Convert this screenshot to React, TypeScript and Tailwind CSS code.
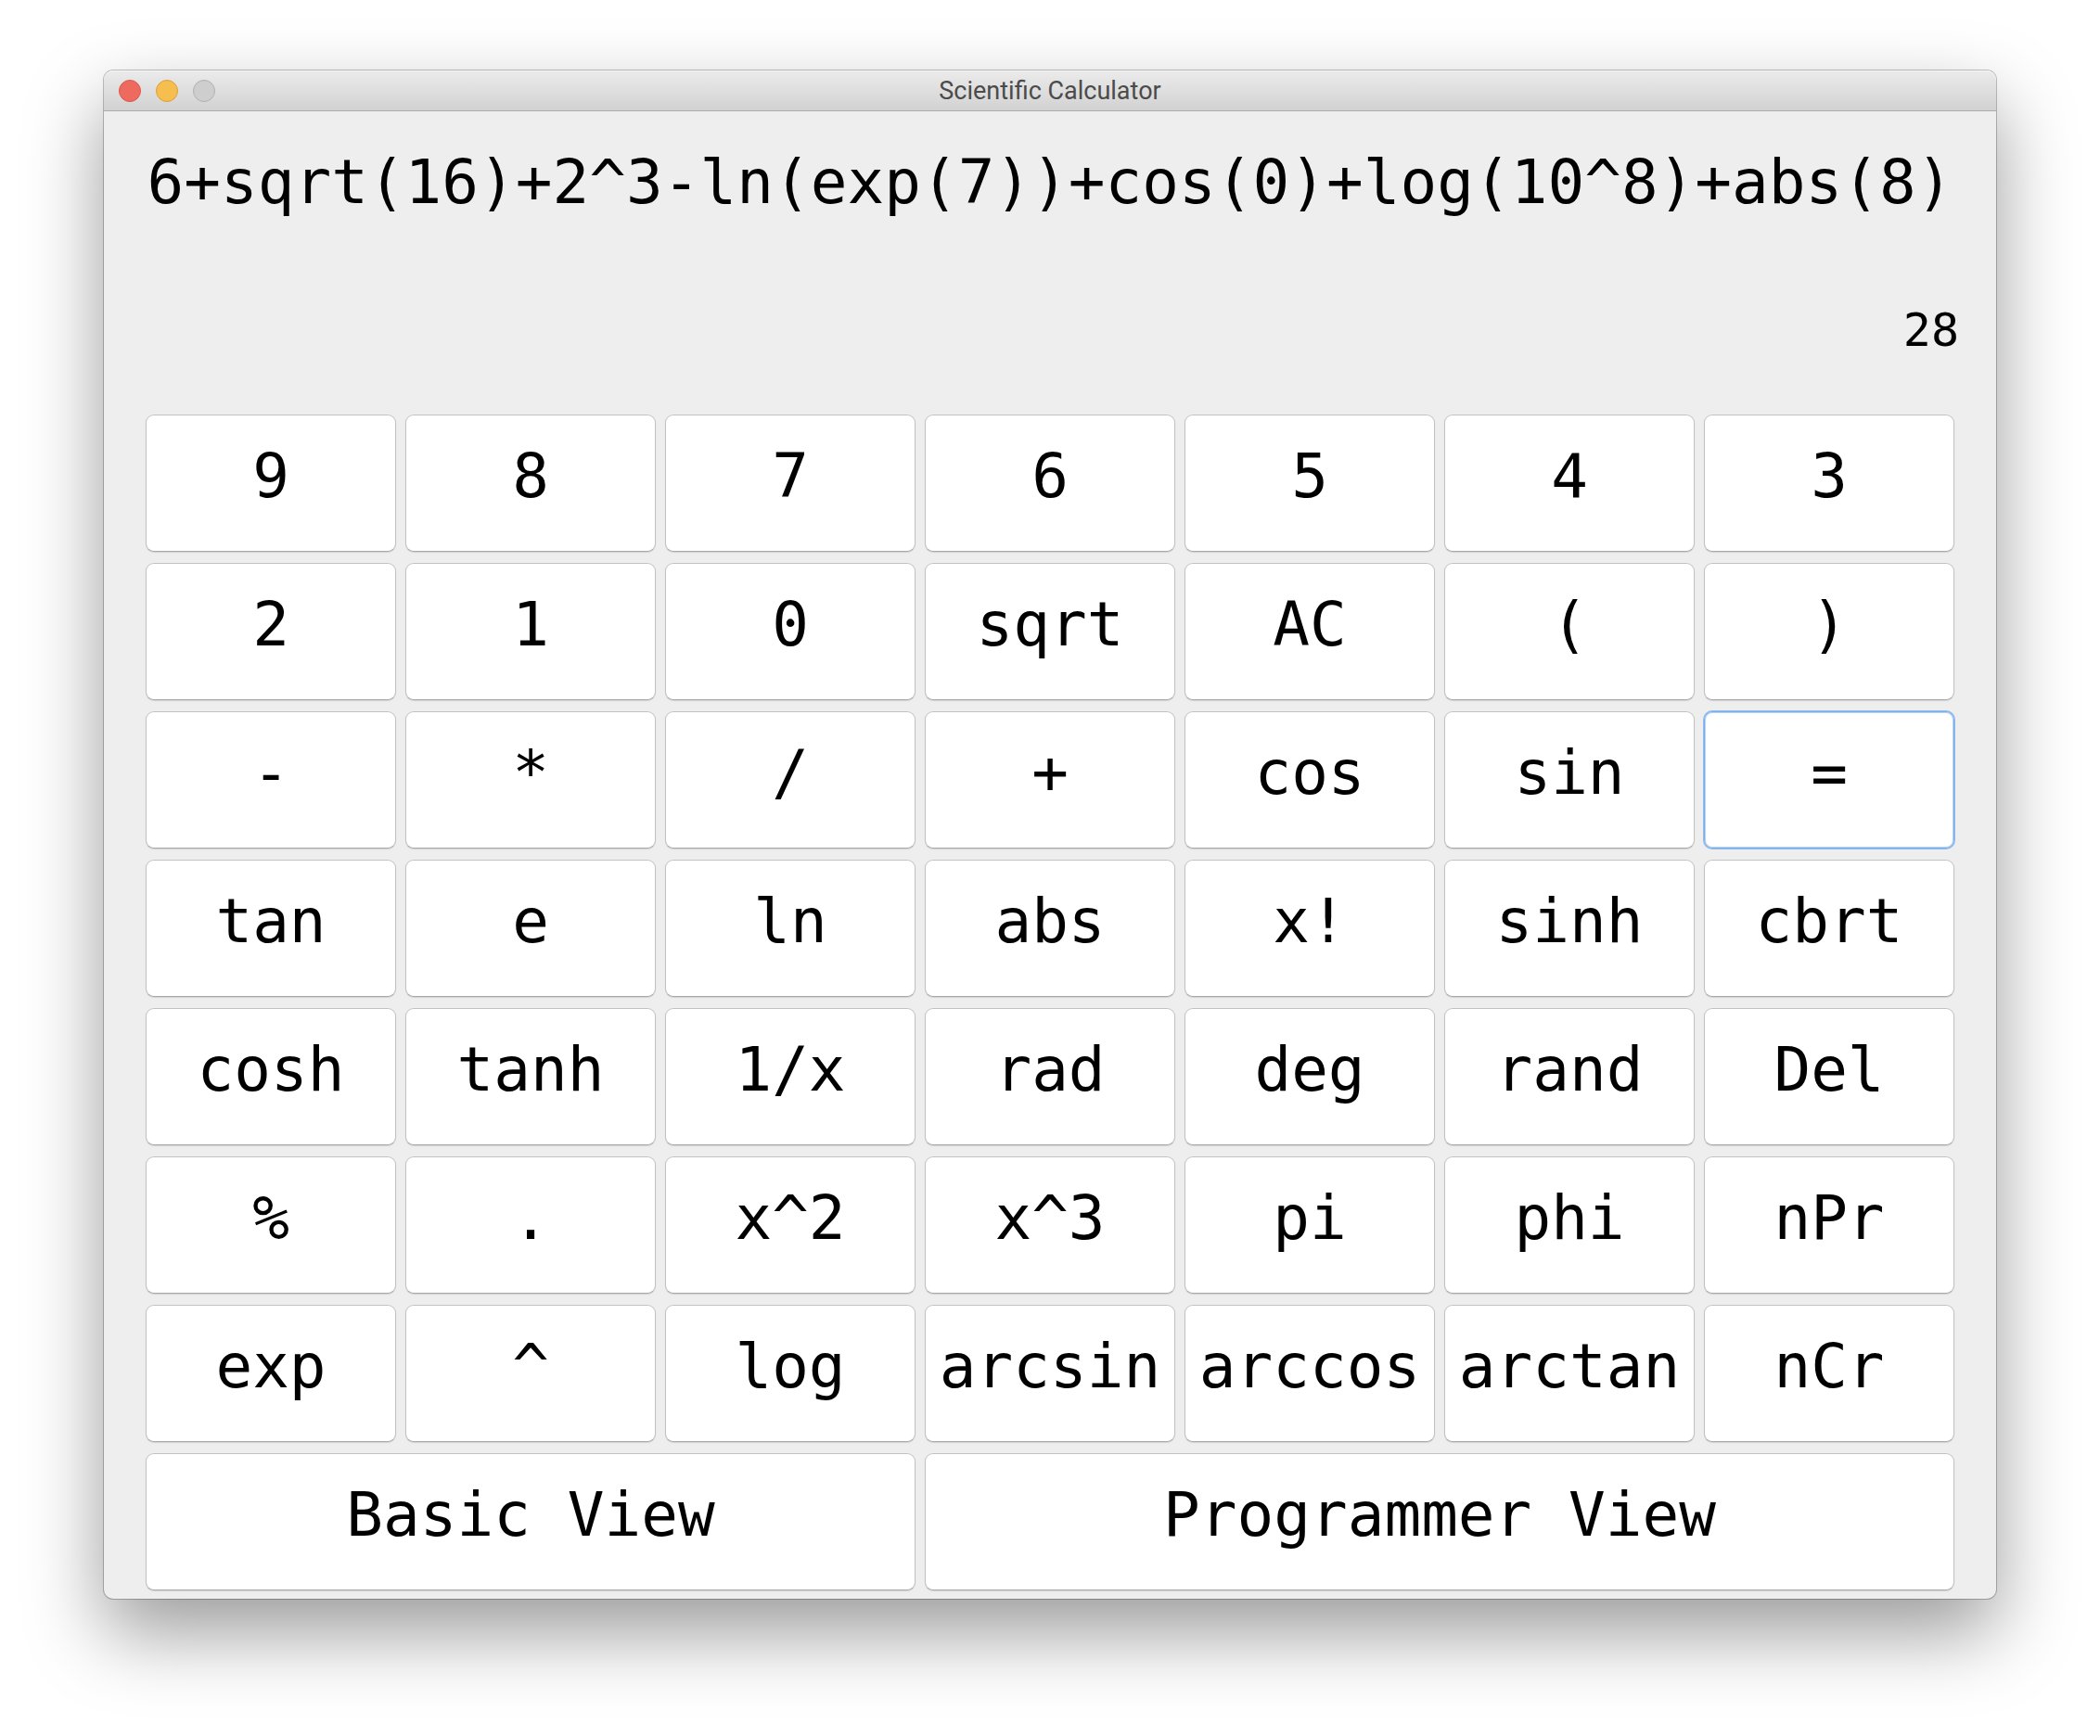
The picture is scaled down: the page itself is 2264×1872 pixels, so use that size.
const keys = [
  '9', '8', '7', '6', '5', '4', '3',
  '2', '1', '0', 'sqrt', 'AC', '(', ')',
  '-', '*', '/', '+', 'cos', 'sin', '=',
  'tan', 'e', 'ln', 'abs', 'x!', 'sinh', 'cbrt',
  'cosh', 'tanh', '1/x', 'rad', 'deg', 'rand', 'Del',
  '%', '.', 'x^2', 'x^3', 'pi', 'phi', 'nPr',
  'exp', '^', 'log', 'arcsin', 'arccos', 'arctan', 'nCr',
];

const keyBase =
  'flex h-[148px] items-center justify-center rounded-[9px] border bg-white pb-3.5 text-[66px] leading-none text-black';
const keyPlain = 'border-[#c2c2c2] border-b-[#a9a9a9] shadow-[0_1px_1px_rgba(0,0,0,0.12)]';
const keyDefault = 'border-[#7db0ea] ring-1 ring-[#8fbcf0] shadow-[inset_0_0_0_1px_#b5d3f6]';

function Key({ label, span = '' }: { label: string; span?: string }) {
  return (
    <button type="button" className={`${keyBase} ${label === '=' ? keyDefault : keyPlain} ${span}`}>
      {label}
    </button>
  );
}

function TitleBar() {
  return (
    <header className="grid h-11 grid-cols-[1fr_auto_1fr] items-center rounded-t-[10px] border-b border-[#acacac] bg-linear-to-b from-[#ebebeb] to-[#d2d2d2] px-4 shadow-[inset_0_1px_0_#f6f6f6]">
      <div className="flex gap-4">
        <button type="button" aria-label="Close" className="size-6 rounded-full border border-[#d9584e] bg-[#ee6a5f]" />
        <button type="button" aria-label="Minimize" className="size-6 rounded-full border border-[#dca03c] bg-[#f6be4f]" />
        <button type="button" aria-label="Zoom" disabled className="size-6 rounded-full border border-[#b1b1b1] bg-[#cecece]" />
      </div>
      <h1 className="pt-0.5 font-['Roboto',sans-serif] text-[27px] leading-none text-[#4b4b4b]">Scientific Calculator</h1>
    </header>
  );
}

export default function App() {
  return (
    <div className="min-h-screen bg-white px-28 pt-19 pb-37">
      <main className="rounded-[10px] bg-[#eeeeee] font-['DejaVu_Sans_Mono',monospace] shadow-[0_0_0_1px_rgba(0,0,0,0.24),0_36px_84px_rgba(0,0,0,0.4)]">
        <TitleBar />
        <section className="flex flex-col gap-[90px] px-10 pt-9" aria-label="Display">
          <input
            readOnly
            aria-label="Expression"
            value="6+sqrt(16)+2^3-ln(exp(7))+cos(0)+log(10^8)+abs(8)"
            className="h-20 w-full bg-transparent text-center text-[66px] text-black outline-none"
          />
          <input
            readOnly
            aria-label="Result"
            value="28"
            className="h-15 w-full bg-transparent text-right text-[50px] text-black outline-none"
          />
        </section>
        <section className="grid grid-cols-7 gap-x-2.5 gap-y-3 px-[45px] pt-[61px] pb-[9px]" aria-label="Keypad">
          {keys.map((k) => (
            <Key key={k} label={k} />
          ))}
          <Key label="Basic View" span="col-span-3" />
          <Key label="Programmer View" span="col-span-4" />
        </section>
      </main>
    </div>
  );
}
